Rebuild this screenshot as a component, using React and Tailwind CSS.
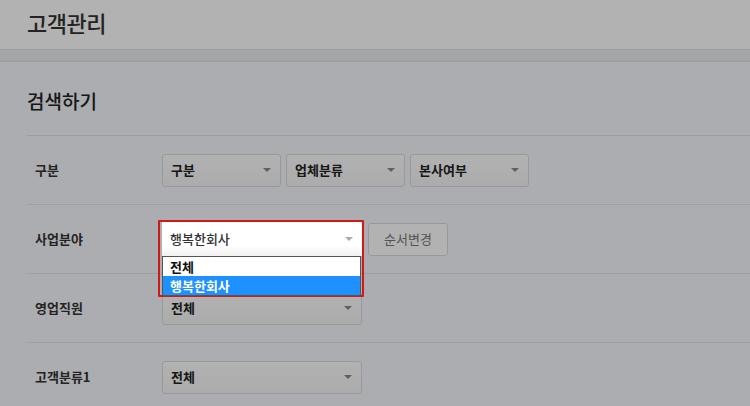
import React from 'react';

const font = { fontFamily: '"Noto Sans CJK KR", "Noto Sans", sans-serif' };

function Arrow({ color = 'border-t-[#8a8a8a]' }) {
  return <span className={`w-0 h-0 border-l-[4px] border-r-[4px] border-t-[4px] border-l-transparent border-r-transparent ${color}`} />;
}

function Select({ label, width = 'w-[119px]' }) {
  return (
    <div className={`${width} h-[33px] flex items-center justify-between pl-[8px] pr-[9px] rounded-[3px] border border-[#dcdcdc] bg-gradient-to-b from-white to-[#f6f6f6] text-[13px] font-bold text-[#222]`}>
      <span>{label}</span>
      <Arrow />
    </div>
  );
}

function Row({ label, children }) {
  return (
    <div className="flex items-center h-[69px] border-b border-[#e4e6ea] pl-[8px]">
      <div className="w-[127px] text-[13px] font-bold text-[#333]">{label}</div>
      <div className="flex items-center gap-[5px]">{children}</div>
    </div>
  );
}

function OpenSelect() {
  return (
    <div className="relative z-20">
      <div className="absolute left-[-4px] right-[-2px] top-[-2px] h-[77px] border-2 border-[#d01818] rounded-[1px] pointer-events-none" />
      <div className="w-[200px] h-[34px] flex items-center justify-between pl-[8px] pr-[9px] bg-gradient-to-b from-white from-70% to-[#f0f0f0] text-[13px] font-medium text-[#333]">
        <span>행복한회사</span>
        <Arrow color="border-t-[#aaa]" />
      </div>
      <div className="absolute left-0 top-[34px] w-[199px] border border-[#555] bg-white text-[13px] font-bold">
        <div className="h-[19px] flex items-center pl-[7px] text-[#111]">전체</div>
        <div className="h-[19px] flex items-center pl-[7px] text-white bg-[#1e90ff]">행복한회사</div>
      </div>
    </div>
  );
}

export default function App() {
  return (
    <div className="relative w-[750px] h-[406px] overflow-hidden bg-[#f7f8fc]" style={font}>
      <div className="h-[49px] bg-white flex items-center pl-[27px] pb-[4px]">
        <h1 className="text-[22px] font-medium text-[#333] tracking-[-0.5px]">고객관리</h1>
      </div>
      <div className="h-[13px] bg-[#eceef0] border-t border-b border-[#dcdee2]" />
      <div className="pl-[27px]">
        <h2 className="h-[74px] flex items-center pt-[6px] text-[19px] font-medium text-[#222] border-b border-[#e0e2e6]">검색하기</h2>
        <Row label="구분">
          <Select label="구분" />
          <Select label="업체분류" />
          <Select label="본사여부" />
        </Row>
        <Row label="사업분야">
          <OpenSelect />
          <div className="ml-[1px] w-[80px] h-[33px] flex items-center justify-center rounded-[3px] border border-[#dcdcdc] bg-white text-[13px] text-[#777]">순서변경</div>
        </Row>
        <Row label="영업직원">
          <Select label="전체" width="w-[200px]" />
        </Row>
        <Row label="고객분류1">
          <Select label="전체" width="w-[200px]" />
        </Row>
      </div>
      <div className="absolute inset-0 z-10 bg-black/30 pointer-events-none" />
    </div>
  );
}
